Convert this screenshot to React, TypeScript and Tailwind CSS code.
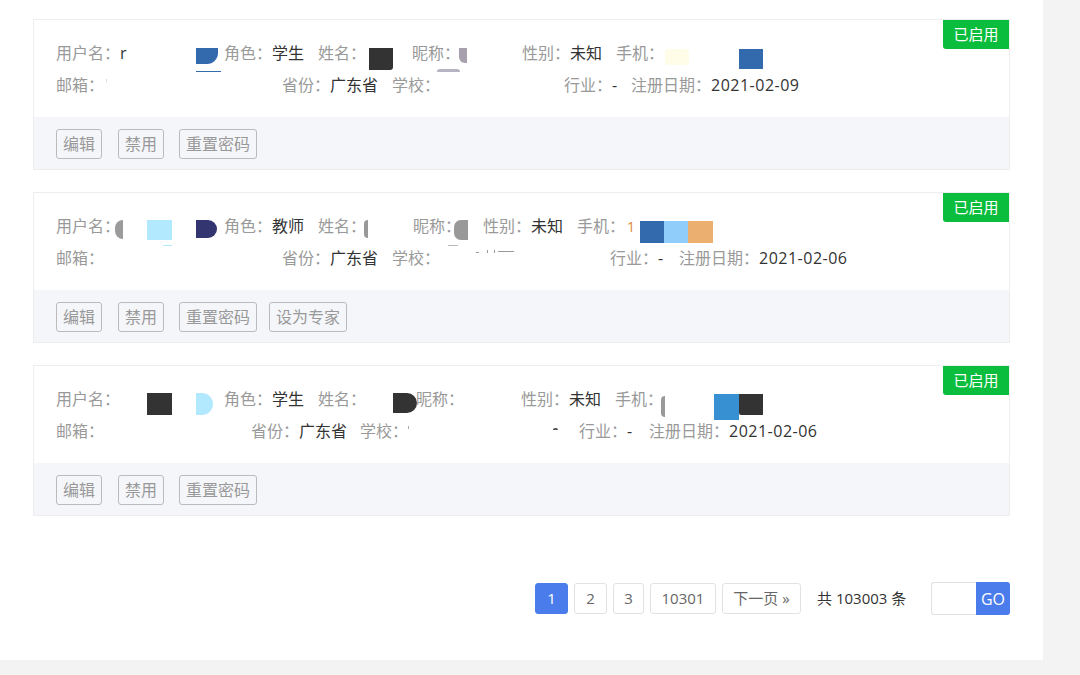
import React from 'react';

// small helpers for the info rows
const Cell: React.FC<{ className: string; label: string; children?: React.ReactNode }> = ({ className, label, children }) => (
  <div className={`flex h-8 shrink-0 items-center whitespace-nowrap ${className}`}>
    <span className="text-[#999]">{label}</span>
    {children}
  </div>
);

const Val: React.FC<{ children: React.ReactNode }> = ({ children }) => <span className="text-[#333]">{children}</span>;

const DateVal: React.FC<{ children: React.ReactNode }> = ({ children }) => (
  <span className="tracking-[0.5px] text-[#333]">{children}</span>
);

// redaction patches left on the screenshot
const Mask: React.FC<{ className: string }> = ({ className }) => <span className={`block shrink-0 self-start ${className}`} />;

const Row: React.FC<{ children: React.ReactNode }> = ({ children }) => (
  <div className="flex h-8 items-start pl-[22px]">{children}</div>
);

const ActionButton: React.FC<{ label: string; className?: string }> = ({ label, className = '' }) => (
  <button
    type="button"
    className={`h-[30px] rounded-[3px] border border-[#bbb] px-[6px] text-[16px] leading-[28px] text-[#999] ${className}`}
  >
    {label}
  </button>
);

const UserCard: React.FC<{ rows: React.ReactNode; expert?: boolean }> = ({ rows, expert }) => (
  <article className="relative h-[151px] border border-[#eee] bg-white">
    <span className="absolute right-0 top-0 flex h-[29px] w-[66px] items-center justify-center rounded-bl-[3px] bg-[#0bbd3d] text-[15px] text-white">
      已启用
    </span>
    <div className="h-[97px] pb-[16px] pt-[17px] text-[16px]">{rows}</div>
    <div className="flex h-[52px] items-start bg-[#f5f6fa] pl-[22px] pt-[12px]">
      <ActionButton label="编辑" className="mr-[16px]" />
      <ActionButton label="禁用" className="mr-[15px]" />
      <ActionButton label="重置密码" className="mr-[12px]" />
      {expert && <ActionButton label="设为专家" />}
    </div>
  </article>
);

const cardOne = (
  <>
    <Row>
      <Cell className="w-[168px] pr-[3px]" label="用户名：">
        <Val>r</Val>
        <span className="ml-auto flex shrink-0 flex-col self-start mt-[11px]">
          <span className="block h-[16px] w-[22px] rounded-br-[11px] bg-[#336aae]" />
          <span className="mt-[7px] block h-px w-[25px] bg-[#336aae]" />
        </span>
      </Cell>
      <Cell className="w-[94px]" label="角色：">
        <Val>学生</Val>
      </Cell>
      <Cell className="w-[94px]" label="姓名：">
        <Mask className="ml-[3px] mt-[11px] h-[22px] w-[24px] rounded-br-[3px] bg-[#333]" />
      </Cell>
      <Cell className="w-[110px]" label="昵称：">
        <Mask className="-ml-px mt-[11px] h-[15px] w-[8px] rounded-bl-[6px] bg-[#a8a0ac]" />
      </Cell>
      <Cell className="w-[94px]" label="性别：">
        <Val>未知</Val>
      </Cell>
      <Cell className="w-[200px]" label="手机：">
        <Mask className="ml-px mt-[12px] h-[16px] w-[24px] rounded-[3px] bg-[#fffde8]" />
        <Mask className="ml-[50px] mt-[12px] h-[20px] w-[24px] bg-[#336aae]" />
      </Cell>
    </Row>
    <Row>
      <Cell className="w-[226px]" label="邮箱：">
        <Mask className="ml-[2px] mt-[10px] h-[3px] w-px bg-[#ddd]" />
      </Cell>
      <Cell className="w-[110px]" label="省份：">
        <Val>广东省</Val>
      </Cell>
      <Cell className="w-[172px]" label="学校：">
        <Mask className="-ml-[3px] h-[3px] w-[23px] rounded-t-full bg-[#b7b2c4]" />
      </Cell>
      <Cell className="w-[67px]" label="行业：">
        <Val>-</Val>
      </Cell>
      <Cell className="w-[200px]" label="注册日期：">
        <DateVal>2021-02-09</DateVal>
      </Cell>
    </Row>
  </>
);

const cardTwo = (
  <>
    <Row>
      <Cell className="w-[168px]" label="用户名：">
        <Mask className="-ml-[5px] mt-[10px] h-[19px] w-[8px] rounded-l-full bg-[#9b9b9b]" />
        <span className="ml-[24px] flex shrink-0 flex-col items-end self-start mt-[10px]">
          <span className="block h-[20px] w-[25px] bg-[#b3e9ff]" />
          <span className="mt-[5px] block h-px w-[9px] bg-[#b3e9ff]" />
        </span>
        <Mask className="ml-[24px] mt-[10px] h-[18px] w-[21px] rounded-r-[10px] bg-[#333570]" />
      </Cell>
      <Cell className="w-[94px]" label="角色：">
        <Val>教师</Val>
      </Cell>
      <Cell className="w-[95px]" label="姓名：">
        <Mask className="-ml-[2px] mt-[10px] h-[18px] w-[4px] rounded-l-full bg-[#999]" />
      </Cell>
      <Cell className="w-[70px]" label="昵称：">
        <span className="-ml-[7px] flex shrink-0 flex-col self-start mt-[10px]">
          <span className="block h-[20px] w-[14px] rounded-l-[7px] bg-[#999]" />
          <span className="-ml-[6px] mt-[5px] block h-px w-[10px] bg-[#bbb]" />
        </span>
      </Cell>
      <Cell className="w-[94px]" label="性别：">
        <Val>未知</Val>
      </Cell>
      <Cell className="w-[200px]" label="手机：">
        <span className="w-[15px] shrink-0 pl-[2px] text-[14px] text-[#d9883a]">1</span>
        <Mask className="mt-[11px] h-[22px] w-[24px] bg-[#336aae]" />
        <Mask className="mt-[11px] h-[22px] w-[24px] bg-[#90cdfb]" />
        <Mask className="mt-[11px] h-[22px] w-[25px] bg-[#ebb06f]" />
      </Cell>
    </Row>
    <Row>
      <Cell className="w-[226px]" label="邮箱：" />
      <Cell className="w-[110px]" label="省份：">
        <Val>广东省</Val>
      </Cell>
      <Cell className="w-[218px]" label="学校：">
        <Mask className="ml-[36px] mt-[10px] h-px w-[3px] bg-[#999]" />
        <Mask className="ml-[8px] mt-[8px] h-[3px] w-px bg-[#999]" />
        <Mask className="ml-[6px] mt-[8px] h-[3px] w-px bg-[#999]" />
        <Mask className="ml-[3px] mt-[9px] h-px w-[16px] bg-[#999]" />
      </Cell>
      <Cell className="w-[69px]" label="行业：">
        <Val>-</Val>
      </Cell>
      <Cell className="w-[200px]" label="注册日期：">
        <DateVal>2021-02-06</DateVal>
      </Cell>
    </Row>
  </>
);

const cardThree = (
  <>
    <Row>
      <Cell className="w-[168px]" label="用户名：">
        <Mask className="ml-[27px] mt-[10px] h-[22px] w-[25px] bg-[#333]" />
        <Mask className="ml-[24px] mt-[10px] h-[22px] w-[17px] rounded-r-full bg-[#b3e9ff]" />
      </Cell>
      <Cell className="w-[98px]" label="角色：">
        <Val>学生</Val>
      </Cell>
      <Cell className="w-[98px] -ml-[4px]" label="姓名：">
        <Mask className="ml-[27px] mt-[10px] h-[20px] w-[24px] rounded-r-[10px] bg-[#333]" />
      </Cell>
      <Cell className="w-[105px]" label="昵称：" />
      <Cell className="w-[94px]" label="性别：">
        <Val>未知</Val>
      </Cell>
      <Cell className="w-[200px]" label="手机：">
        <Mask className="-ml-[2px] mt-[13px] h-[21px] w-[4px] rounded-l-full bg-[#999]" />
        <Mask className="ml-[49px] mt-[11px] h-[26px] w-[25px] bg-[#3690d2]" />
        <Mask className="mt-[11px] h-[21px] w-[24px] rounded-bl-[2px] bg-[#333]" />
      </Cell>
    </Row>
    <Row>
      <Cell className="w-[195px]" label="邮箱：" />
      <Cell className="w-[109px]" label="省份：">
        <Val>广东省</Val>
      </Cell>
      <Cell className="w-[219px]" label="学校：">
        <Mask className="mt-[11px] h-[3px] w-px bg-[#aaa]" />
        <Mask className="ml-[144px] mt-[13px] h-[2px] w-[5px] rounded-t-full bg-[#555]" />
      </Cell>
      <Cell className="w-[70px]" label="行业：">
        <Val>-</Val>
      </Cell>
      <Cell className="w-[200px]" label="注册日期：">
        <DateVal>2021-02-06</DateVal>
      </Cell>
    </Row>
  </>
);

const PageButton: React.FC<{ label: string; className: string; active?: boolean }> = ({ label, className, active }) => (
  <button
    type="button"
    className={`h-[31px] rounded-[3px] border text-[15px] ${
      active ? 'border-[#4a7cec] bg-[#4a7cec] text-white' : 'border-[#e2e2e2] bg-white text-[#666]'
    } ${className}`}
  >
    {label}
  </button>
);

export default function App() {
  return (
    <div className="h-[675px] w-[1080px] overflow-hidden bg-[#f3f3f3] font-['Open_Sans','Noto_Sans_CJK_SC',sans-serif]">
      <main className="h-[660px] w-[1043px] bg-white px-[33px] pt-[19px]">
        <div className="flex flex-col gap-[22px]">
          <UserCard rows={cardOne} />
          <UserCard rows={cardTwo} expert />
          <UserCard rows={cardThree} />
        </div>

        <div className="mt-[66px] flex items-center justify-end">
          <div className="flex items-center gap-[6px]">
            <PageButton label="1" className="w-[33px]" active />
            <PageButton label="2" className="w-[33px]" />
            <PageButton label="3" className="w-[31px]" />
            <PageButton label="10301" className="w-[66px]" />
            <PageButton label="下一页 »" className="w-[79px] text-[14px]" />
          </div>
          <span className="ml-[16px] w-[92px] text-[15px] text-[#333]">共 103003 条</span>
          <div className="ml-[22px] flex h-[33px]">
            <input className="h-full w-[45px] rounded-l-[3px] border border-r-0 border-[#e2e2e2] outline-none" />
            <button type="button" className="h-full w-[34px] rounded-r-[3px] bg-[#4a7cec] text-[16px] text-white">
              GO
            </button>
          </div>
        </div>
      </main>
    </div>
  );
}
